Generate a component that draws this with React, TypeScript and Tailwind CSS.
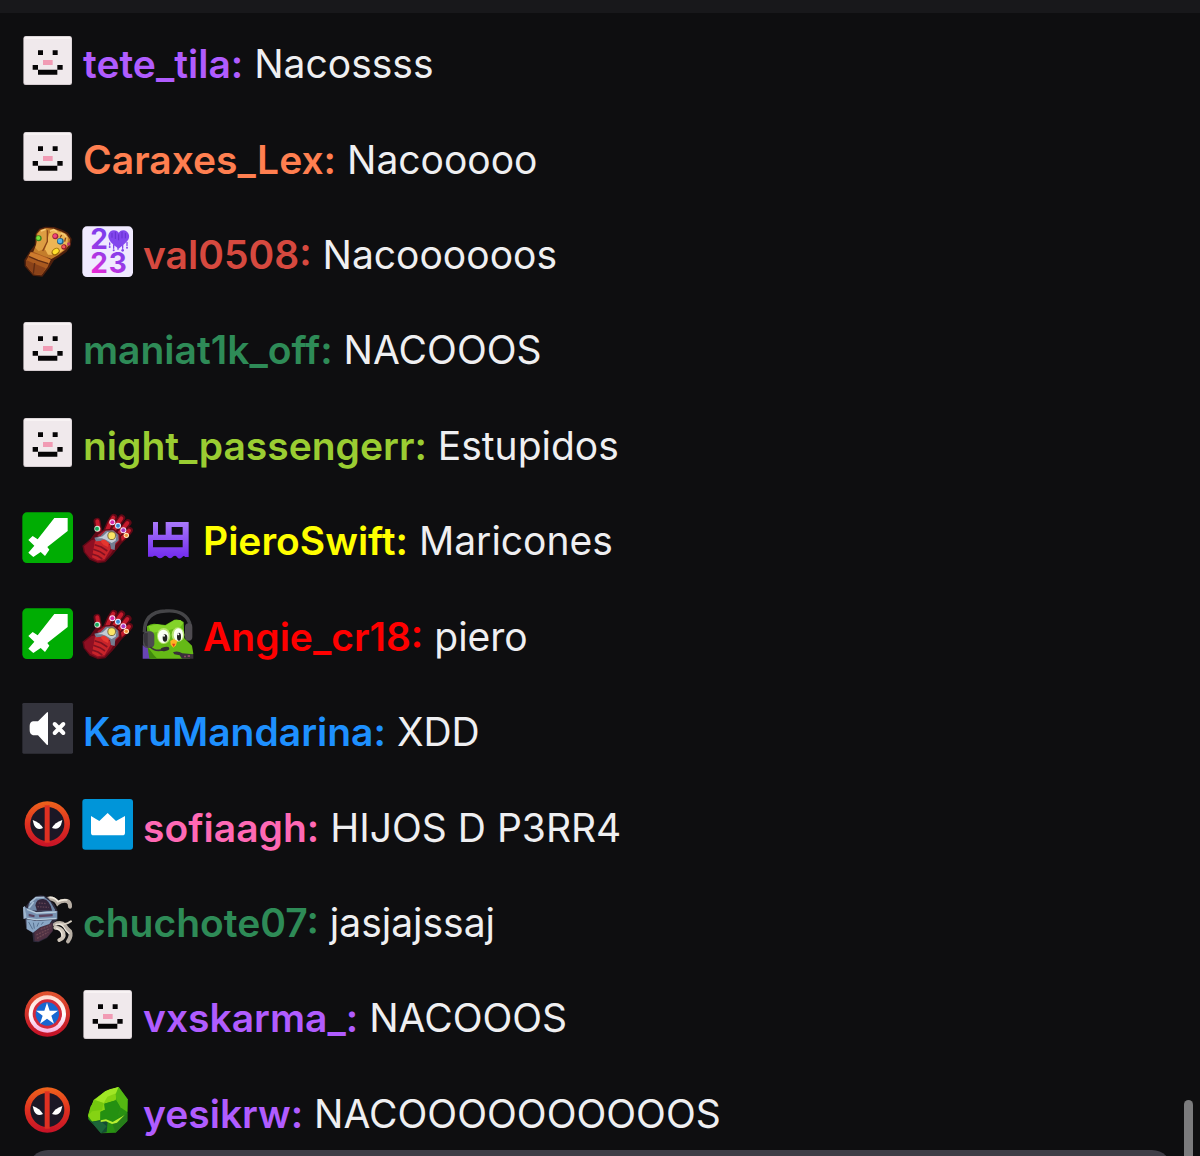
import type { ReactNode } from "react";

function Badge({ label, box, children }: { label: string; box: string; children: ReactNode }) {
  return (
    <svg role="img" aria-label={label} viewBox={box} className="size-[51px] shrink-0 overflow-visible">
      {children}
    </svg>
  );
}

function Face() {
  return (
    <Badge label="Marshmallow" box="66 105 153 153">
      <rect x="70" y="109" width="146" height="146" rx="7" fill="#d5ccd0" />
      <rect x="72" y="109" width="142" height="143" rx="6" fill="#f0e9ec" />
      <path d="M76 111h134v6H76z" fill="#f8f3f4" />
      <path d="M114 151h15v14h-15zM158 151h15v14h-15zM98 195h16v14H98zM172 195h16v14h-16zM114 209h58v15h-58z" fill="#060506" />
      <path d="M129 180h29v15h-29z" fill="#f19bb4" />
    </Badge>
  );
}

function Gauntlet() {
  return (
    <Badge label="Golden gauntlet" box="36 33 153 153">
      <path d="M43 135L60 108L74 90L77 56L88 41L106 35L132 36L158 45L174 54L185 72L182 93L169 111L151 124L132 136L118 158L97 185L69 182L44 154Z" fill="#4e200d" />
      <path d="M49 136L62 112L84 108L122 134L113 156L94 181L70 178L49 152Z" fill="#a9591f" />
      <path d="M62 112L88 120L122 134L116 146L84 136L55 124Z" fill="#cf7b2e" />
      <path d="M50 136L74 146L107 160L95 180L70 177L50 152Z" fill="#8a4219" />
      <path d="M74 144L70 176M56 124l28 12 31 10" stroke="#5f2b12" strokeWidth="4" fill="none" />
      <path d="M70 110L79 87L80 57L91 44L110 39L132 41L156 50L169 57L180 73L178 89L164 106L144 121L124 132L92 119Z" fill="#c47d2b" />
      <path d="M81 80L83 57L93 45L109 44L113 60L110 84L100 103L86 109L76 98Z" fill="#dd9d42" />
      <path d="M117 56L132 44L154 53L173 66L173 88L161 105L140 120L114 119L105 103Z" fill="#edb554" />
      <path d="M112 46L112 80L98 108M155 60L150 68M167 68L164 80" fill="none" stroke="#8a4517" strokeWidth="4" />
      <path d="M93 48l14-5M120 49l11-5 10 6M152 54l11 4 6 8" fill="none" stroke="#f7cb77" strokeWidth="5" />
      <circle cx="86" cy="70" r="9" fill="#39831f" /><circle cx="85" cy="69" r="6" fill="#7be33c" />
      <circle cx="136" cy="64" r="9" fill="#9b223e" /><circle cx="135" cy="63" r="6" fill="#f0447c" />
      <circle cx="151" cy="79" r="10" fill="#226289" /><circle cx="150" cy="78" r="7" fill="#55b2e8" />
      <circle cx="162" cy="96" r="8" fill="#941f26" /><circle cx="161" cy="95" r="5" fill="#f4545f" />
      <circle cx="176" cy="87" r="5" fill="#b83a6a" />
      <ellipse cx="137" cy="110" rx="13" ry="10" transform="rotate(-35 137 110)" fill="#9a6a0a" />
      <ellipse cx="137" cy="109" rx="10" ry="7" transform="rotate(-35 137 109)" fill="#ffe02a" />
    </Badge>
  );
}

function Year() {
  return (
    <Badge label="2023 recap" box="216 33 153 153">
      <defs>
        <linearGradient id="year-ink" gradientUnits="userSpaceOnUse" x1="340" y1="42" x2="250" y2="174">
          <stop offset="0" stopColor="#6f3df0" /><stop offset=".55" stopColor="#923ce8" /><stop offset="1" stopColor="#ee28d6" />
        </linearGradient>
      </defs>
      <rect x="217" y="34" width="152" height="152" rx="14" fill="#f0eaff" />
      <g fill="url(#year-ink)" className="font-['Inter'] text-[84px] font-bold">
        <text x="241" y="103">2</text>
        <text x="241" y="173">2</text>
        <text x="296" y="173">3</text>
      </g>
      <path d="M326 53C316 40 297 45 295 61C294 74 304 83 310 89L326 101L343 87C352 79 359 72 357 60C353 45 335 40 326 53Z" fill="#8247ed" />
      <path d="M306 54v14M316 50v22M326 58v18M336 50v20M346 54v16" stroke="#6630cf" strokeWidth="3" />
      <path d="M299 84v6M311 90v10M324 98v5M338 90v10M351 82v10" stroke="#8247ed" strokeWidth="4" strokeLinecap="round" />
      <circle cx="299" cy="96" r="3" fill="#8247ed" />
      <circle cx="311" cy="106" r="3" fill="#8247ed" />
      <circle cx="338" cy="106" r="4" fill="#8247ed" />
      <circle cx="351" cy="98" r="3" fill="#8247ed" />
    </Badge>
  );
}

function Moderator() {
  return (
    <Badge label="Moderator" box="36 36 153 153">
      <rect x="37" y="37" width="152" height="152" rx="14" fill="#00ad03" />
      <path d="M133 54H173V93L112 141L118 149L105 168L92 156L70 171L55 158L73 137L55 120L68 108L83 118Z" fill="#fff" />
    </Badge>
  );
}

function RedGauntlet() {
  return (
    <Badge label="Red gauntlet" box="216 36 153 153">
      <g fill="none" strokeLinecap="round" strokeLinejoin="round">
        <g stroke="#5f0916" strokeWidth="21">
          <path d="M268 105L261 64" />
          <path d="M288 98L300 70L311 52" />
          <path d="M308 98L322 72L335 54" />
          <path d="M322 108L340 84L354 68" />
          <path d="M328 122L348 104L358 91" />
        </g>
        <g stroke="#c41a2c" strokeWidth="12">
          <path d="M268 105L262 64" />
          <path d="M288 98L300 70L310 53" />
          <path d="M308 98L322 72L334 55" />
          <path d="M322 108L340 84L352 69" />
          <path d="M328 122L348 104L357 92" />
        </g>
      </g>
      <path d="M217 137L241 118L254 100L285 88L312 87L332 104L336 128L322 147L307 165L286 187L264 190L239 179L221 157Z" fill="#5f0916" />
      <path d="M222 139L244 121L270 114L300 128L312 146L302 162L283 183L263 185L240 174L225 156Z" fill="#8e0f22" />
      <path d="M255 122L276 122L300 136L302 146L284 178L263 181L246 172Z" fill="#c8242a" />
      <path d="M254 134l20 7 18 12M250 148l20 7 15 10M246 162l18 6 13 9" stroke="#801221" strokeWidth="5" fill="none" />
      <path d="M262 106L282 92L310 90L328 106L328 122L316 134L296 132L276 120Z" fill="#a81a2a" />
      <path d="M253 113L272 108L287 92L309 91L325 104L326 121L316 130L314 150L303 147L300 132L292 126L278 122L258 124Z" fill="#747d91" />
      <path d="M260 115l18-6 14-13 16 1 11 12-2 13-12 7-16-9-13-5z" fill="#c3cbd5" />
      <path d="M275 119l10 0 12 10-3 12-13-6-8-9z" fill="#e5372f" />
      <circle cx="305" cy="107" r="13" fill="#857038" /><circle cx="305" cy="107" r="10" fill="#fbe566" />
      <circle cx="262" cy="86" r="9" fill="#d4e6da" /><circle cx="261" cy="86" r="6" fill="#14aa5b" />
      <circle cx="307" cy="67" r="9" fill="#fae0f6" /><circle cx="307" cy="67" r="6" fill="#d72ca8" />
      <circle cx="324" cy="77" r="9" fill="#e2f3ff" /><circle cx="324" cy="77" r="6" fill="#3c86d0" />
      <circle cx="340" cy="91" r="9" fill="#fbdff4" /><circle cx="340" cy="91" r="6" fill="#a938c0" />
      <circle cx="349" cy="106" r="8" fill="#ffebbd" /><circle cx="349" cy="106" r="5" fill="#f4913a" />
    </Badge>
  );
}

function Train() {
  return (
    <Badge label="Hype train" box="397 36 153 153">
      <defs>
        <linearGradient id="train" x2="0" y2="1"><stop stopColor="#a979fa" /><stop offset="1" stopColor="#7129ee" /></linearGradient>
      </defs>
      <path
        fillRule="evenodd"
        fill="url(#train)"
        d="M430 66H445V104H468V66H537V171H526Q523 165 518 171Q508 180 502 171Q497 164 491 169Q482 180 473 170Q467 164 461 170Q450 180 442 170Q436 164 429 170H415V104H430ZM486 81V104H519V81ZM430 120V142H519V120Z"
      />
    </Badge>
  );
}

function Owl() {
  return (
    <Badge label="Owl with headset" box="397 37 153 153">
      <path d="M399 149L423 156L438 189H399Z" fill="#6845b4" />
      <path d="M412 92Q425 82 440 85L467 88L494 72Q510 69 522 79L524 128L547 150L551 174L540 189H422L413 153Z" fill="#65b916" />
      <path d="M416 92L443 86L467 90L494 74L512 73L521 82L512 94L476 104L425 112Z" fill="#83d329" />
      <path d="M414 154l19 25 10 10h-24z" fill="#40890e" />
      <ellipse cx="462" cy="121" rx="20" ry="24" fill="#b9e673" /><ellipse cx="505" cy="117" rx="19" ry="22" fill="#b9e673" />
      <ellipse cx="461" cy="122" rx="16" ry="20" fill="#fafff5" /><ellipse cx="506" cy="117" rx="14" ry="19" fill="#fafff5" />
      <ellipse cx="466" cy="127" rx="7" ry="11" fill="#202220" /><ellipse cx="508" cy="123" rx="6" ry="12" fill="#202220" />
      <circle cx="463" cy="120" r="3" fill="#fff" /><circle cx="506" cy="116" r="3" fill="#fff" />
      <path d="M482 136l10-6 11 6-4 13-8 7-8-9z" fill="#ffb321" /><path d="M487 144l10 0-5 10z" fill="#e33d1f" />
      <path d="M404 110C404 70 423 48 467 46C511 42 537 61 542 91" fill="none" stroke="#454548" strokeWidth="10" />
      <rect x="400" y="107" width="34" height="50" rx="13" fill="#4c4a50" />
      <path d="M404 113q-7 16 3 36l7 5v-43z" fill="#37353b" />
      <rect x="526" y="83" width="22" height="52" rx="11" fill="#4e4b50" />
      <path d="M422 154Q436 169 462 162" fill="none" stroke="#3b3439" strokeWidth="5" />
      <ellipse cx="466" cy="160" rx="13" ry="6" transform="rotate(-10 466 160)" fill="#322d31" />
      <path d="M490 170Q504 164 518 173L551 176V189H517L510 179L494 176Z" fill="#393039" />
      <path d="M523 180h6v5h-6zM534 178h7v6h-7z" fill="#8a4966" />
    </Badge>
  );
}

function Muted() {
  return (
    <Badge label="Watching without audio" box="36 39 153 153">
      <rect x="37" y="39" width="152" height="152" rx="4" fill="#34343d" />
      <path d="M112 66Q114 66 114 69V163Q114 166 111 165L84 136H69Q59 133 59 121V108Q59 96 69 94H84Z" fill="#fff" />
      <path d="M134 102l26 27m0-27l-26 27" stroke="#fff" strokeWidth="12" strokeLinecap="round" />
    </Badge>
  );
}

function Antihero({ id }: { id: string }) {
  return (
    <Badge label="Masked antihero" box="36 41 153 153">
      <defs>
        <linearGradient id={id} x2="0" y2="1"><stop stopColor="#ee641c" /><stop offset=".5" stopColor="#df3020" /><stop offset="1" stopColor="#c61227" /></linearGradient>
      </defs>
      <circle cx="112" cy="116" r="68" fill={`url(#${id})`} />
      <circle cx="112" cy="116" r="51" fill="#1b1725" />
      <path d="M104 60h15v112h-15z" fill="#de3022" />
      <path d="M68 104Q90 112 99 128Q81 137 72 119Z" fill="#fff" />
      <path d="M157 104Q134 112 126 128Q145 135 153 119Z" fill="#fff" />
    </Badge>
  );
}

function Crown() {
  return (
    <Badge label="Prime Gaming" box="216 41 153 153">
      <rect x="217" y="41" width="152" height="152" rx="9" fill="#0095d9" />
      <path d="M243 92L268 107L293 83L318 107L345 92V142Q345 150 337 150H251Q243 150 243 142Z" fill="#fff" />
    </Badge>
  );
}

function Helmet() {
  return (
    <Badge label="Knight helmet" box="36 42 153 153">
      <g fill="none" strokeLinecap="round">
        <path d="M114 56Q134 54 143 70Q155 60 171 63Q181 66 180 80" stroke="#b8afa5" strokeWidth="12" />
        <path d="M120 52Q136 52 144 65Q155 58 170 60" stroke="#efe8dc" strokeWidth="5" />
        <path d="M134 133Q154 124 164 136Q170 146 180 154Q186 168 174 184" stroke="#b8afa5" strokeWidth="12" />
        <path d="M136 143Q154 144 160 158Q164 174 148 180" stroke="#cfc6ba" strokeWidth="12" />
        <path d="M150 131Q168 136 183 124" stroke="#d6cec2" strokeWidth="6" />
        <path d="M138 133Q154 130 161 141Q168 154 177 160M140 145Q156 152 156 168" stroke="#f1eadf" strokeWidth="4" />
      </g>
      <path d="M44 83L57 66L75 50Q94 40 112 52L132 73L142 91L140 121L128 132L128 154L111 174L85 187L70 185L67 158L49 147L44 116L39 117L39 81Z" fill="#2e2a3c" />
      <path d="M52 91L57 70L79 51L103 51L121 65L136 91L128 98L89 92Z" fill="#6f87a6" />
      <path d="M76 76Q80 55 100 57Q120 60 126 92L81 92Z" fill="#33253a" />
      <path d="M60 68l18-15 25-1M57 84l14-18" fill="none" stroke="#a7bfd4" strokeWidth="5" />
      <path d="M86 69l24 2M82 80l34 2" stroke="#5d4152" strokeWidth="4" strokeDasharray="5 3" />
      <path d="M45 82L78 96L142 93V118L79 121L49 116Z" fill="#7892b2" />
      <path d="M51 88L80 99L139 96M52 115l27 4 60-4" stroke="#b7cbdc" strokeWidth="4" fill="none" />
      <path d="M56 101l18 5-1 6-17-3zM86 104l42-2v7l-40 3z" fill="#5c4460" />
      <path d="M73 157L94 140L128 128L128 152L111 172L85 184L74 182Z" fill="#4e3143" />
      <path d="M79 165l42-20M81 175l34-19M92 148l30-11" stroke="#6d4853" strokeWidth="4" strokeDasharray="6 3" />
      <path d="M49 118L77 122L126 120L118 132L90 142L69 158L50 147Z" fill="#8aa7c5" />
      <path d="M56 126l12 22M70 128l3 18M86 128l-5 12M100 126l-6 8" stroke="#56708f" strokeWidth="3" />
      <path d="M39 82l6-4 5 36-9 3z" fill="#9eb6ce" />
    </Badge>
  );
}

function Shield() {
  return (
    <Badge label="Star shield" box="36 43 153 153">
      <defs>
        <linearGradient id="shield-ring" x2="0" y2="1"><stop stopColor="#e2552f" /><stop offset="1" stopColor="#c30f27" /></linearGradient>
        <linearGradient id="shield-pale" x2="0" y2="1"><stop stopColor="#ffd9cc" /><stop offset=".5" stopColor="#fff" /><stop offset="1" stopColor="#f7b0e0" /></linearGradient>
      </defs>
      <circle cx="112" cy="118" r="68" fill="url(#shield-ring)" />
      <circle cx="112" cy="118" r="56" fill="url(#shield-pale)" />
      <circle cx="112" cy="118" r="44" fill="#d32a3c" />
      <circle cx="112" cy="118" r="35" fill="#1767d1" />
      <path d="M111 84L119 108H144L124 123L132 147L111 132L90 147L98 123L78 108H103Z" fill="#fff" />
    </Badge>
  );
}

function Rock() {
  return (
    <Badge label="Green crystal" box="246 45 153 153">
      <path d="M316 64L356 51L383 88L382 153L347 188L303 190L285 169L265 148L264 137L281 90Z" fill="#299112" />
      <path d="M316 64L356 51L347 91L313 101L315 119L301 125L301 150L277 155L264 138L281 90Z" fill="#85d313" />
      <path d="M316 64L329 58L356 51L348 70L322 80L311 100L284 90Z" fill="#a0e625" />
      <path d="M284 90L311 99L306 120L276 124L264 137L271 111Z" fill="#74c80e" />
      <path d="M356 51L383 88L382 126L361 112L349 91L347 73Z" fill="#54b812" />
      <path d="M313 101L348 91L361 112L352 135L375 142L342 158L321 150L301 151L302 126L315 119Z" fill="#249011" />
      <path d="M375 135L382 128V153L347 188L336 157Z" fill="#267e19" />
      <path d="M265 148L277 155L301 151L323 152L320 187L303 190L285 169Z" fill="#154b32" />
      <path d="M277 155l25-2 18 16-17 21-18-21z" fill="#1c6539" />
      <path d="M302 151L318 148L338 156L374 135L351 158L336 162L318 154L302 156Z" fill="#b7ef30" />
    </Badge>
  );
}

const messages: { user: string; color: string; text: string; badges: ReactNode }[] = [
  { user: "tete_tila", color: "text-[#b05cff]", text: "Nacossss", badges: <Face /> },
  { user: "Caraxes_Lex", color: "text-[#ff7f50]", text: "Nacooooo", badges: <Face /> },
  { user: "val0508", color: "text-[#d6493f]", text: "Nacoooooos", badges: <><Gauntlet /><Year /></> },
  { user: "maniat1k_off", color: "text-[#2e8b57]", text: "NACOOOS", badges: <Face /> },
  { user: "night_passengerr", color: "text-[#9acd32]", text: "Estupidos", badges: <Face /> },
  { user: "PieroSwift", color: "text-[#ffff00]", text: "Maricones", badges: <><Moderator /><RedGauntlet /><Train /></> },
  { user: "Angie_cr18", color: "text-[#ff0000]", text: "piero", badges: <><Moderator /><RedGauntlet /><Owl /></> },
  { user: "KaruMandarina", color: "text-[#1e90ff]", text: "XDD", badges: <Muted /> },
  { user: "sofiaagh", color: "text-[#ff69b4]", text: "HIJOS D P3RR4", badges: <><Antihero id="mask-a" /><Crown /></> },
  { user: "chuchote07", color: "text-[#2e8b57]", text: "jasjajssaj", badges: <Helmet /> },
  { user: "vxskarma_", color: "text-[#b05cff]", text: "NACOOOS", badges: <><Shield /><Face /></> },
  { user: "yesikrw", color: "text-[#b05cff]", text: "NACOOOOOOOOOOS", badges: <><Antihero id="mask-b" /><Rock /></> },
];

export default function App() {
  return (
    <div className="relative flex h-screen flex-col overflow-hidden bg-[#0e0e10] font-['Inter',sans-serif] text-[#efeff1]">
      <header className="h-[13px] shrink-0 bg-[#18181b]" />
      <ul className="-mb-[2px] flex flex-1 flex-col pl-[22px]">
        {messages.map((m) => (
          <li key={m.user} className="flex flex-1 items-center gap-[10px]">
            <span className="flex shrink-0 gap-[9px]">{m.badges}</span>
            <p className="pt-[7px] text-[39px] leading-[48px]">
              <span className={`font-semibold ${m.color}`}>{m.user}:</span> {m.text}
            </p>
          </li>
        ))}
      </ul>
      <div className="absolute right-[7px] bottom-0 h-14 w-[9px] rounded-t-full bg-[#7b7b7d]" />
      <input
        type="text"
        aria-label="Send a message"
        className="absolute right-[28px] -bottom-[90px] left-[28px] h-24 rounded-[20px] bg-[#3f3d46] outline-none"
      />
    </div>
  );
}
